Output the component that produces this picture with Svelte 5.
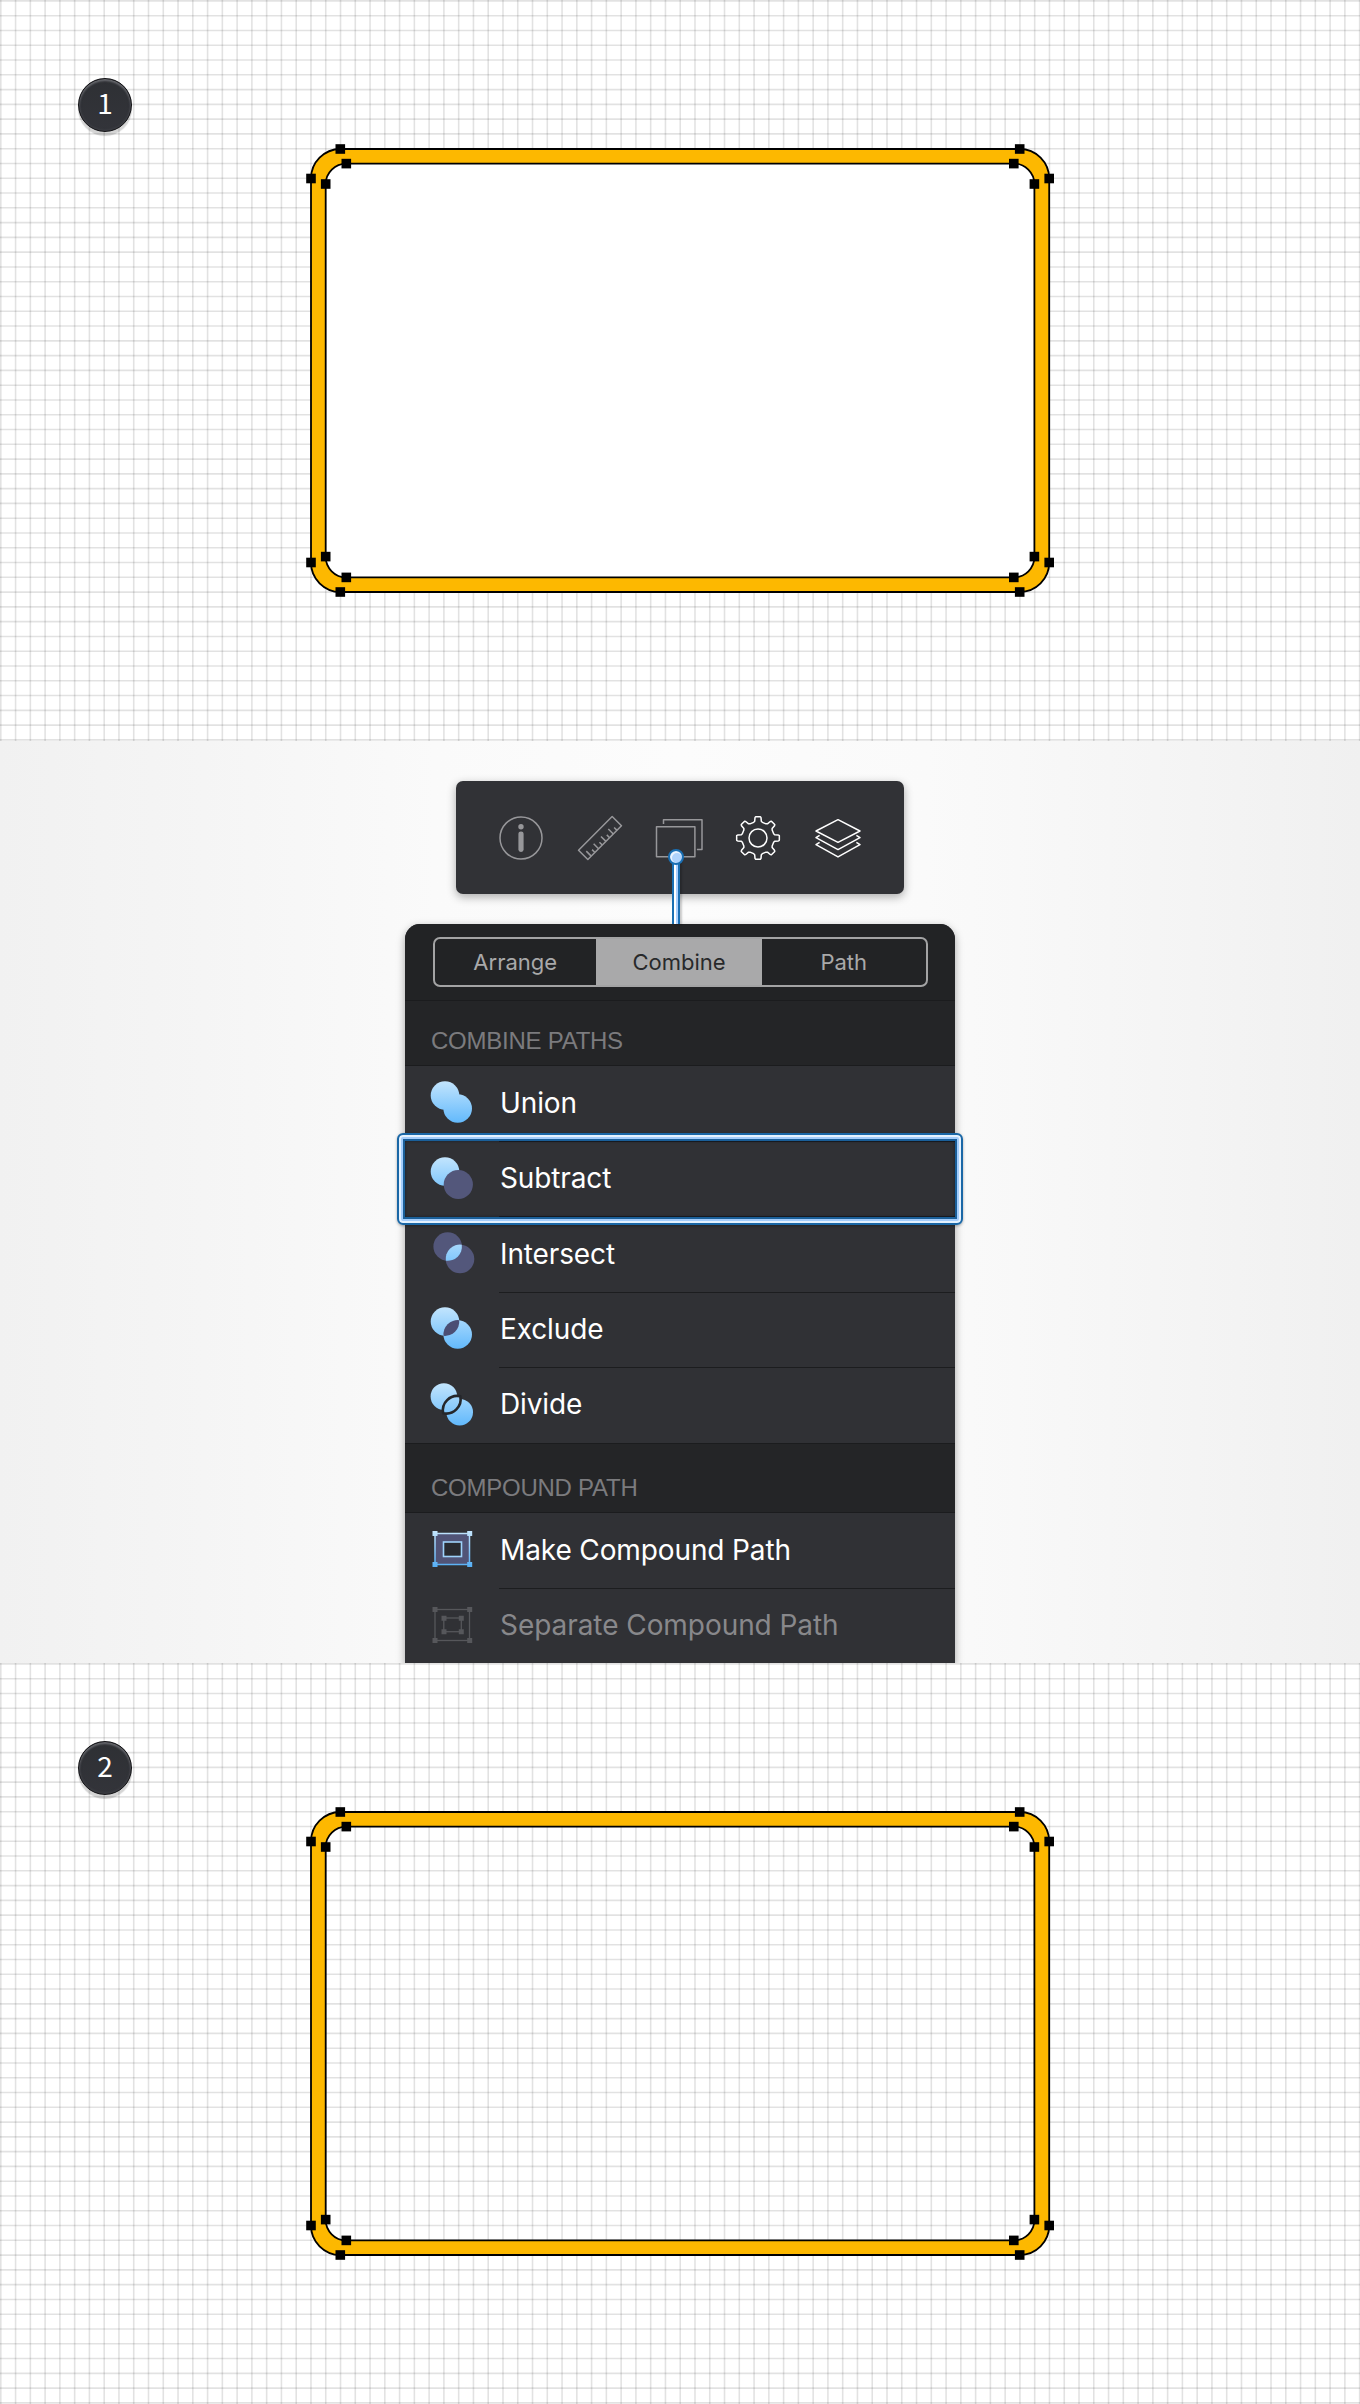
<script>
  // Gear outline: eight teeth, generated by rotating one tooth about the origin.
  const profile = [[-13, -47], [-10, -50], [-9, -61], [-7, -64], [7, -64], [9, -61], [10, -50], [13, -47]];
  const gear = Array.from({ length: 8 }, (_, k) => {
    const a = (k * Math.PI) / 4;
    return profile.map(([x, y]) => {
      const rx = (x * Math.cos(a) - y * Math.sin(a)) / 3;
      const ry = (x * Math.sin(a) + y * Math.cos(a)) / 3;
      return `${rx.toFixed(2)},${ry.toFixed(2)}`;
    }).join(' ');
  }).join(' ');

  const handles = [
    [340.3, 149], [311, 178.5], [346.3, 163.6], [325.7, 184],
    [1019.7, 149], [1049.2, 178.5], [1013.8, 163.6], [1034.4, 184],
    [340.3, 592], [311, 562.5], [346.3, 577.4], [325.7, 556.6],
    [1019.7, 592], [1049.2, 562.5], [1013.8, 577.4], [1034.4, 556.6]
  ];

  const lines = Array.from({ length: 93 }, (_, i) => 0.8 + i * 14.77);
  const rows = Array.from({ length: 51 }, (_, i) => 0.9 + i * 14.78);

  const ops = ['Union', 'Subtract', 'Intersect', 'Exclude', 'Divide'];
</script>

{#snippet board(n, filled)}
  <section class="board">
    <svg class="canvas" width="1360" height="741" viewBox="0 0 1360 741">
      <g class="grid">
        {#each lines as x}<line x1={x} x2={x} y1="0" y2="741" />{/each}
        {#each rows as y}<line x1="0" x2="1360" y1={y} y2={y} />{/each}
      </g>
      {#if filled}<rect x="325.7" y="163.6" width="708.7" height="413.8" rx="20.6" fill="#fff" />{/if}
      <path class="frame" fill-rule="evenodd" d="M340.3 149H1019.7A29.5 29.5 0 0 1 1049.2 178.5V562.5A29.5 29.5 0 0 1 1019.7 592H340.3A29.5 29.5 0 0 1 311 562.5V178.5A29.5 29.5 0 0 1 340.3 149ZM346.3 163.6H1013.8A20.6 20.6 0 0 1 1034.4 184V556.6A20.6 20.6 0 0 1 1013.8 577.4H346.3A20.6 20.6 0 0 1 325.7 556.6V184A20.6 20.6 0 0 1 346.3 163.6Z" />
      {#each handles as [x, y]}<rect x={x - 4.8} y={y - 4.8} width="9.6" height="9.6" />{/each}
    </svg>
    <div class="badge">{n}</div>
  </section>
{/snippet}

<main>
  {@render board(1, true)}

  <section class="menu-stage">
    <div class="toolbar">
      <svg width="48" height="48" viewBox="-24 -24 48 48" class="dim">
        <circle r="21" />
        <circle cy="-11.2" r="2.7" class="solid" />
        <rect x="-2.6" y="-6.6" width="5.2" height="20.6" rx="2.4" class="solid" />
      </svg>
      <svg width="48" height="48" viewBox="-24 -24 48 48" class="dim">
        <g transform="rotate(-45)">
          <rect x="-23.8" y="-6.6" width="47.6" height="13.2" />
          <path d="M-19 6.6v-7M-13.8 6.6v-4M-8.6 6.6v-7M-3.4 6.6v-4M1.8 6.6v-7M7 6.6v-4M12.2 6.6v-7M17.4 6.6v-4" />
        </g>
      </svg>
      <svg width="48" height="48" viewBox="-24 -24 48 48" class="dim">
        <rect x="-22.5" y="-11.3" width="38.4" height="30" />
        <path d="M-15.5-13.9V-18.3H23V11.5H17.9" />
      </svg>
      <svg width="48" height="48" viewBox="-24 -24 48 48" class="bright">
        <polygon points={gear} />
        <circle r="9" />
      </svg>
      <svg width="48" height="48" viewBox="-24 -24 48 48" class="bright">
        <path d="M0-18.3L22-7L0 4.3L-22-7ZM-18.4-2.7L-22-.3L0 11.6L22-.3L18.4-2.7M-18.4 4.3L-22 6.7L0 18.9L22 6.7L18.4 4.3" />
      </svg>
      <div class="connector"></div>
    </div>

    <div class="panel">
      <div class="tabs">
        <div class="segmented">
          <span>Arrange</span><span class="active">Combine</span><span>Path</span>
        </div>
      </div>
      <h2 class="first">COMBINE PATHS</h2>
      {#each ops as op, i}
        <div class="row" class:selected={op === 'Subtract'}>
          <svg width="60" height="60" viewBox="0 0 60 60">
            <defs>
              <linearGradient id="sky{i}" gradientUnits="userSpaceOnUse" x1="0" y1="9" x2="0" y2="51">
                <stop offset="0" stop-color="#c3e5fd" /><stop offset="1" stop-color="#62b9fc" />
              </linearGradient>
            </defs>
            {#if op === 'Union'}
              <g fill="url(#sky{i})"><circle cx="24" cy="23.5" r="14.3" /><circle cx="36.7" cy="36.5" r="14.3" /></g>
            {:else if op === 'Subtract'}
              <circle cx="24" cy="23.5" r="14.3" fill="url(#sky{i})" />
              <circle cx="37.3" cy="36.5" r="14.6" fill="#53577b" />
            {:else if op === 'Intersect'}
              <g fill="#53577b"><circle cx="26.7" cy="23.5" r="14.3" /><circle cx="39" cy="36" r="14.3" /></g>
              <path d="M40.8 21.7A14.3 14.3 0 0 1 24.8 37.7A14.3 14.3 0 0 1 40.8 21.7Z" fill="url(#sky{i})" />
            {:else if op === 'Exclude'}
              <g fill="url(#sky{i})"><circle cx="24" cy="23.5" r="14.3" /><circle cx="36.7" cy="36.5" r="14.3" /></g>
              <path d="M38.2 22.2A14.3 14.3 0 0 1 22.5 37.8A14.3 14.3 0 0 1 38.2 22.2Z" fill="#4b4e74" />
            {:else}
              <circle cx="22.9" cy="22.5" r="13.3" fill="url(#sky{i})" />
              <circle cx="38.7" cy="38.2" r="13.3" fill="url(#sky{i})" />
              <path d="M39.3 22.3A14.3 14.3 0 0 1 22.2 39.2A14.3 14.3 0 0 1 39.3 22.3Z" fill="url(#sky{i})" stroke="#25272b" stroke-width="2.6" />
            {/if}
          </svg>
          <span>{op}</span>
        </div>
      {/each}
      <h2>COMPOUND PATH</h2>
      <div class="row">
        <svg width="60" height="60" viewBox="0 0 60 60">
          <defs>
            <linearGradient id="edge" gradientUnits="userSpaceOnUse" x1="0" y1="12" x2="0" y2="48">
              <stop offset="0" stop-color="#c3e5fd" /><stop offset="1" stop-color="#55aff5" />
            </linearGradient>
          </defs>
          <rect x="14" y="14.5" width="34.5" height="31" fill="#515477" stroke="url(#edge)" stroke-width="1.5" />
          <rect x="22.5" y="23" width="18" height="14.5" fill="#292b30" stroke="#9ed2fb" stroke-width="1.6" />
          <path fill="url(#edge)" d="M11.5 12h5v5h-5zM46.2 12h5v5h-5zM11.5 43h5v5h-5zM46.2 43h5v5h-5z" />
        </svg>
        <span>Make Compound Path</span>
      </div>
      <div class="row disabled">
        <svg width="60" height="60" viewBox="0 0 60 60">
          <g fill="none" stroke="#56575b" stroke-width="1.3">
            <rect x="14" y="14.5" width="34.5" height="31" /><rect x="22.8" y="23" width="17.5" height="13.7" />
          </g>
          <path fill="#56575b" d="M11.5 12h5v5h-5zM46.2 12h5v5h-5zM11.5 43h5v5h-5zM46.2 43h5v5h-5zM20.5 20.7h5v5h-5zM37.8 20.7h5v5h-5zM20.5 34.3h5v5h-5zM37.8 34.3h5v5h-5z" />
        </svg>
        <span>Separate Compound Path</span>
      </div>
    </div>
  </section>

  {@render board(2, false)}
</main>

<style>
  :global(body) { margin: 0; }
  main {
    width: 1360px;
    height: 2404px;
    overflow: hidden;
    background: #fff;
    font-family: Inter, "Liberation Sans", sans-serif;
  }
  .board { position: relative; height: 741px; background: #fff; overflow: hidden; }
  .canvas { display: block; }
  .grid line { stroke: #000; stroke-opacity: 0.115; stroke-width: 1.6; }
  .frame { fill: #fdb800; stroke: #000; stroke-width: 1.8; }
  .badge {
    position: absolute;
    left: 78px;
    top: 78px;
    width: 54px;
    height: 54px;
    box-sizing: border-box;
    border: 1.3px solid #101013;
    border-radius: 50%;
    background: linear-gradient(#2e3034, #33343a);
    box-shadow: inset 0 2px 2px #66676c, inset 0 0 2px 1px #3f4046, 0 4px 1px rgba(0, 0, 0, 0.17);
    color: #fff;
    font: 400 28px/46px "Noto Sans CJK SC", sans-serif;
    text-align: center;
  }
  .menu-stage {
    height: 922px;
    overflow: hidden;
    display: flex;
    flex-direction: column;
    align-items: center;
    background: linear-gradient(90deg, #f1f1f1, #f5f5f5 15%, #fafafa 32%, #fcfcfc 50%, #fafafa 68%, #f5f5f5 85%, #f0f0f0);
  }
  .toolbar {
    position: relative;
    z-index: 1;
    box-sizing: border-box;
    width: 448px;
    height: 113px;
    margin-top: 40px;
    padding: 0 42.5px 0 40.5px;
    border-radius: 7px;
    display: flex;
    align-items: center;
    justify-content: space-between;
    flex-shrink: 0;
    background: #313236;
    box-shadow: 0 3px 10px rgba(0, 0, 0, 0.32);
  }
  .toolbar svg { fill: none; stroke-width: 1.5; stroke-linejoin: round; flex: none; }
  .dim { stroke: #97979a; }
  .dim .solid { fill: #97979a; stroke: none; }
  .bright { stroke: #fff; stroke-width: 1.6; }
  .connector {
    position: absolute;
    left: 216px;
    top: 80px;
    width: 4px;
    height: 63px;
    border: solid #1a6fb3;
    border-width: 0 2px;
    background: linear-gradient(90deg, #fff 50%, #a9cfff 50%);
    box-shadow: 2px 1px 2px rgba(0, 0, 0, 0.2);
  }
  .connector::before {
    content: "";
    position: absolute;
    left: -6px;
    top: -12px;
    width: 12px;
    height: 12px;
    border: 2px solid #1a6fb3;
    border-radius: 50%;
    background: #afd3fc;
    box-shadow: inset 1px 1px 0 1px #e9f4ff;
  }
  .panel {
    width: 550px;
    margin-top: 30px;
    border-radius: 15px 15px 0 0;
    background: #303135;
    box-shadow: 0 3px 9px rgba(0, 0, 0, 0.35);
    flex-shrink: 0;
  }
  .tabs {
    box-sizing: border-box;
    height: 77px;
    padding: 13px 27.5px 0;
    border-bottom: 1px solid #1b1c1e;
    border-radius: 15px 15px 0 0;
    background: #222325;
  }
  .segmented {
    display: grid;
    grid-template-columns: 161.5px 166px 1fr;
    box-sizing: border-box;
    height: 50px;
    border: 2px solid #a3a3a4;
    border-radius: 7px;
    overflow: hidden;
    color: #a9a9aa;
    font-size: 22px;
    line-height: 47px;
    text-align: center;
  }
  .segmented span { margin-top: -0.5px; height: 48px; }
  .segmented .active { background: #a9a9aa; color: #28292b; }
  h2 {
    box-sizing: border-box;
    height: 70px;
    margin: 0;
    padding: 11px 0 0 26px;
    border-bottom: 1px solid #1b1c1e;
    border-top: 1px solid #1b1c1e;
    background: #242527;
    color: #7b7b7e;
    font: 400 24px/66px "Liberation Sans", sans-serif;
    letter-spacing: -0.25px;
  }
  h2.first { height: 65px; padding-top: 9px; border-top: 0; line-height: 62px; }
  .row {
    position: relative;
    box-sizing: border-box;
    display: flex;
    align-items: center;
    gap: 19px;
    height: 75.4px;
    padding: 0 0 3px 16px;
    color: #fff;
    font-size: 28px;
    letter-spacing: -0.12px;
  }
  .row svg { flex: none; }
  .row span { padding-top: 1.2px; }
  .row + .row::before {
    content: "";
    position: absolute;
    top: -0.5px;
    left: 94px;
    right: 0;
    height: 1px;
    background: #1c1d1f;
  }
  .row.disabled { color: #88888b; letter-spacing: -0.06px; }
  .selected::after {
    content: "";
    position: absolute;
    inset: -8.6px -8px -8px -8px;
    box-sizing: border-box;
    border: 2px solid #1a67a6;
    border-radius: 6px;
    box-shadow: inset 0 0 0 2px #e4f2ff, inset 0 0 0 4px #a4cdfb, inset 0 0 0 6px #1a5f99, inset 0 0 3px 6px rgba(0, 20, 40, 0.6), 0 1px 3px rgba(0, 0, 0, 0.3);
    z-index: 2;
  }
</style>
